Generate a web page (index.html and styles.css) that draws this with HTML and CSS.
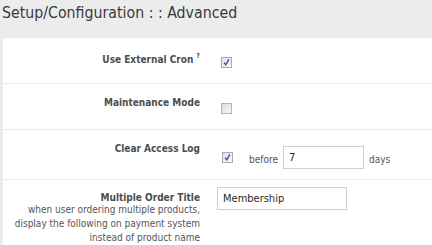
FILE: index.html
```html
<!DOCTYPE html>
<html>
<head>
<meta charset="utf-8">
<link rel="stylesheet" href="styles.css">
</head>
<body>
<h1 class="title">Setup/Configuration : : Advanced</h1>
<div class="panel">
  <div class="row row-cron">
    <div class="label"><b>Use External Cron</b><sup class="help">?</sup></div>
    <div class="ctl"><span class="cb checked"><svg viewBox="0 0 9 9" width="9" height="9"><path d="M2 4.6 L3.8 6.8 L6.9 1.4" fill="none" stroke="#3552a8" stroke-width="1.4"/></svg></span></div>
  </div>
  <div class="row">
    <div class="label"><b>Maintenance Mode</b></div>
    <div class="ctl"><span class="cb"></span></div>
  </div>
  <div class="row row-log">
    <div class="label"><b>Clear Access Log</b></div>
    <div class="ctl inline">
      <span class="cb checked"><svg viewBox="0 0 9 9" width="9" height="9"><path d="M2 4.6 L3.8 6.8 L6.9 1.4" fill="none" stroke="#3552a8" stroke-width="1.4"/></svg></span>
      <span class="word before">before</span>
      <span class="field short">7</span>
      <span class="word">days</span>
    </div>
  </div>
  <div class="row row-title">
    <div class="label">
      <b>Multiple Order Title</b>
      <div class="desc">when user ordering multiple products,<br>display the following on payment system<br>instead of product name</div>
    </div>
    <div class="ctl top"><span class="field long">Membership</span></div>
  </div>
</div>
</body>
</html>
```
FILE: styles.css
```css
html, body {
  margin: 0;
  padding: 0;
  background: #ececec;
  font-family: "DejaVu Sans Condensed", "DejaVu Sans", sans-serif;
  color: #4a4a4a;
  overflow: hidden;
  height: 245px;
}
.title {
  margin: 0 0 15px 2px;
  padding-top: 3px;
  font-size: 15.75px;
  line-height: 20px;
  font-weight: normal;
  color: #3a3a3a;
}
.panel {
  margin-left: 3px;
  background: #fff;
  height: 207px;
  overflow: hidden;
}
.row {
  display: grid;
  grid-template-columns: 197px auto;
  column-gap: 17px;
  padding: 14px 0 10px;
  border-bottom: 1px solid #ebebeb;
  min-height: 21px;
}
.label {
  text-align: right;
  font-size: 10px;
  line-height: 14px;
  margin-top: -2px;
  align-self: start;
}
.label b { color: #4d4d4d; }
.help {
  font-size: 7px;
  font-weight: bold;
  vertical-align: top;
  line-height: 8px;
  margin-left: 3px;
  position: relative;
  top: -1px;
  color: #555;
}
.row-cron .label { margin-top: 1px; }
.ctl {
  align-self: center;
  display: flex;
  align-items: center;
}
.cb {
  display: inline-flex;
  align-items: center;
  justify-content: center;
  box-sizing: border-box;
  width: 11px;
  height: 11px;
  margin-left: 4px;
  border: 1px solid #b4b4b4;
  background: linear-gradient(135deg, #dcdcdc, #f6f6f6);
}
.cb.checked {
  border-color: #a9a9b4;
  background: linear-gradient(135deg, #e2e2e8, #f8f8fa);
}
.row-log { min-height: 25px; }
.row-log .ctl { margin-top: 2px; }
.row-log .cb { margin-left: 5px; }
.word {
  font-size: 10px;
  color: #555;
  line-height: 14px;
}
.before { margin-left: 16px; margin-right: 5px; margin-top: 4px; }
.field {
  box-sizing: border-box;
  height: 23px;
  border: 1px solid #cfcfcf;
  background: #fff;
  font-size: 11px;
  line-height: 21px;
  padding-left: 5px;
  color: #2a2a2a;
}
.field.short { width: 81px; margin-right: 5px; }
.field + .word { margin-top: 4px; }
.field.long { width: 130px; }
.row-title { border-bottom: none; }
.row-title .label { margin-top: -3px; }
.ctl.top { align-self: start; margin-top: -7px; }
.desc {
  font-size: 10px;
  line-height: 14px;
  color: #555;
  margin-top: -2px;
}
```
